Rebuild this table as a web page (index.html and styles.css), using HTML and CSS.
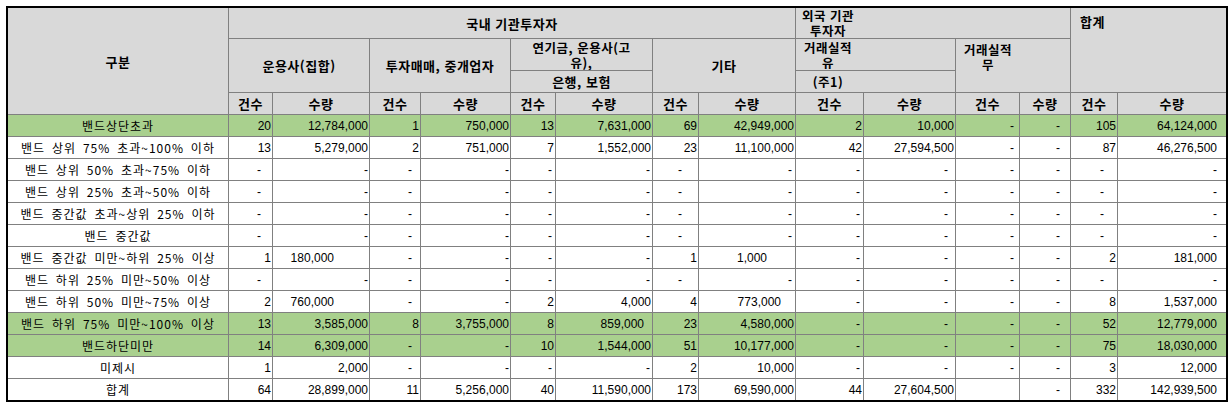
FILE: index.html
```html
<!DOCTYPE html>
<html lang="ko">
<head>
<meta charset="utf-8">
<link rel="stylesheet" href="styles.css">
</head>
<body>
<table class="grid">
<colgroup>
<col class="c-label"><col class="c-44"><col class="c-97"><col class="c-51"><col class="c-90"><col class="c-45"><col class="c-97"><col class="c-46"><col class="c-97"><col class="c-68"><col class="c-92"><col class="c-64"><col class="c-51"><col class="c-47"><col class="c-108">
</colgroup>
<thead>
<tr class="h1">
<th rowspan="4">구분</th>
<th colspan="8">국내 기관투자자</th>
<th colspan="4" class="blk"><div class="blk-in">외국 기관<br>투자자</div></th>
<th colspan="2" rowspan="3" class="total-h"><div class="total-in">합계</div></th>
</tr>
<tr class="h2">
<th colspan="2" rowspan="2">운용사(집합)</th>
<th colspan="2" rowspan="2">투자매매, 중개업자</th>
<th colspan="2" class="two">연기금, 운용사(고<br>유),</th>
<th colspan="2" rowspan="2">기타</th>
<th colspan="2" class="blk"><div class="blk-in">거래실적<br>유</div></th>
<th colspan="2" rowspan="2" class="blk top"><div class="blk-in">거래실적<br>무</div></th>
</tr>
<tr class="h3">
<th colspan="2">은행, 보험</th>
<th colspan="2" class="blk"><div class="blk-in">(주1)</div></th>
</tr>
<tr class="h4">
<th>건수</th><th>수량</th><th>건수</th><th>수량</th><th>건수</th><th>수량</th><th>건수</th><th>수량</th><th>건수</th><th>수량</th><th>건수</th><th>수량</th><th>건수</th><th class="end">수량</th>
</tr>
</thead>
<tbody>
<tr class="g">
<td class="lb">밴드상단초과</td><td>20</td><td>12,784,000</td><td>1</td><td>750,000</td><td>13</td><td>7,631,000</td><td>69</td><td>42,949,000</td><td>2</td><td>10,000</td><td class="z">-</td><td class="z">-</td><td>105</td><td class="end">64,124,000</td>
</tr>
<tr>
<td class="lb">밴드 상위 75% 초과~100% 이하</td><td>13</td><td>5,279,000</td><td>2</td><td>751,000</td><td>7</td><td>1,552,000</td><td>23</td><td>11,100,000</td><td>42</td><td>27,594,500</td><td class="z">-</td><td class="z">-</td><td>87</td><td class="end">46,276,500</td>
</tr>
<tr>
<td class="lb">밴드 상위 50% 초과~75% 이하</td><td class="z">-</td><td class="z">-</td><td class="z">-</td><td class="z">-</td><td class="z">-</td><td class="z">-</td><td class="z">-</td><td class="z">-</td><td class="z">-</td><td class="z">-</td><td class="z">-</td><td class="z">-</td><td class="z">-</td><td class="z end">-</td>
</tr>
<tr>
<td class="lb">밴드 상위 25% 초과~50% 이하</td><td class="z">-</td><td class="z">-</td><td class="z">-</td><td class="z">-</td><td class="z">-</td><td class="z">-</td><td class="z">-</td><td class="z">-</td><td class="z">-</td><td class="z">-</td><td class="z">-</td><td class="z">-</td><td class="z">-</td><td class="z end">-</td>
</tr>
<tr>
<td class="lb">밴드 중간값 초과~상위 25% 이하</td><td class="z">-</td><td class="z">-</td><td class="z">-</td><td class="z">-</td><td class="z">-</td><td class="z">-</td><td class="z">-</td><td class="z">-</td><td class="z">-</td><td class="z">-</td><td class="z">-</td><td class="z">-</td><td class="z">-</td><td class="z end">-</td>
</tr>
<tr>
<td class="lb">밴드 중간값</td><td class="z">-</td><td class="z">-</td><td class="z">-</td><td class="z">-</td><td class="z">-</td><td class="z">-</td><td class="z">-</td><td class="z">-</td><td class="z">-</td><td class="z">-</td><td class="z">-</td><td class="z">-</td><td class="z">-</td><td class="z end">-</td>
</tr>
<tr>
<td class="lb">밴드 중간값 미만~하위 25% 이상</td><td>1</td><td class="p35">180,000</td><td class="z">-</td><td class="z">-</td><td class="z">-</td><td class="z">-</td><td>1</td><td class="p28">1,000</td><td class="z">-</td><td class="z">-</td><td class="z">-</td><td class="z">-</td><td>2</td><td class="end">181,000</td>
</tr>
<tr>
<td class="lb">밴드 하위 25% 미만~50% 이상</td><td class="z">-</td><td class="z">-</td><td class="z">-</td><td class="z">-</td><td class="z">-</td><td class="z">-</td><td class="z">-</td><td class="z">-</td><td class="z">-</td><td class="z">-</td><td class="z">-</td><td class="z">-</td><td class="z">-</td><td class="z end">-</td>
</tr>
<tr>
<td class="lb">밴드 하위 50% 미만~75% 이상</td><td>2</td><td class="p35">760,000</td><td class="z">-</td><td class="z">-</td><td>2</td><td>4,000</td><td>4</td><td class="p14">773,000</td><td class="z">-</td><td class="z">-</td><td class="z">-</td><td class="z">-</td><td>8</td><td class="end">1,537,000</td>
</tr>
<tr class="g">
<td class="lb">밴드 하위 75% 미만~100% 이상</td><td>13</td><td>3,585,000</td><td>8</td><td>3,755,000</td><td>8</td><td class="p8">859,000</td><td>23</td><td>4,580,000</td><td class="z">-</td><td class="z">-</td><td class="z">-</td><td class="z">-</td><td>52</td><td class="end">12,779,000</td>
</tr>
<tr class="g">
<td class="lb">밴드하단미만</td><td>14</td><td>6,309,000</td><td class="z">-</td><td class="z">-</td><td>10</td><td>1,544,000</td><td>51</td><td>10,177,000</td><td class="z">-</td><td class="z">-</td><td class="z">-</td><td class="z">-</td><td>75</td><td class="end">18,030,000</td>
</tr>
<tr>
<td class="lb">미제시</td><td>1</td><td>2,000</td><td class="z">-</td><td class="z">-</td><td class="z">-</td><td class="z">-</td><td>2</td><td>10,000</td><td class="z">-</td><td class="z">-</td><td class="z">-</td><td class="z">-</td><td>3</td><td class="end">12,000</td>
</tr>
<tr class="last">
<td class="lb">합계</td><td>64</td><td>28,899,000</td><td>11</td><td>5,256,000</td><td>40</td><td>11,590,000</td><td>173</td><td>69,590,000</td><td>44</td><td>27,604,500</td><td></td><td class="z">-</td><td>332</td><td class="end">142,939,500</td>
</tr>
</tbody>
</table>
</body>
</html>
```
FILE: styles.css
```css
html, body {
  margin: 0;
  padding: 0;
  background: #ffffff;
}
body {
  padding: 6px 0 0 6px;
}
.grid {
  table-layout: fixed;
  border-collapse: separate;
  border-spacing: 0;
  width: 1222px;
  border: 2px solid #000000;
  font-family: "Noto Sans CJK KR", sans-serif;
  color: #000000;
}
.c-label { width: 221px; }
.c-44 { width: 44px; }
.c-97 { width: 97px; }
.c-51 { width: 51px; }
.c-90 { width: 90px; }
.c-45 { width: 45px; }
.c-46 { width: 46px; }
.c-68 { width: 68px; }
.c-92 { width: 92px; }
.c-64 { width: 64px; }
.c-47 { width: 47px; }
.c-108 { width: 108px; }

.grid th, .grid td {
  border-right: 1px solid #808080;
  border-bottom: 1px solid #808080;
  padding: 0;
  overflow: hidden;
  white-space: nowrap;
}
.grid th {
  background: #d9d9d9;
  font-size: 13px;
  font-weight: 700;
  letter-spacing: 0.5px;
  line-height: 15px;
  text-align: center;
  vertical-align: middle;
}
.grid .end { border-right: none; }
.grid .total-h { border-right: none; }

.h1 { height: 31px; }
.h2 { height: 32px; }
.h3 { height: 22px; }
.h4 { height: 22px; }
tbody tr { height: 22px; }
tbody tr.last { height: 21px; }
tbody tr.last td { border-bottom: none; }

th.two {
  font-size: 12.5px;
}
th.blk {
  text-align: left;
}
th.blk .blk-in {
  display: inline-block;
  width: 62px;
  text-align: center;
  padding-left: 1px;
  font-size: 12.5px;
}
th.blk.top {
  vertical-align: top;
  padding-top: 3px;
}
th.total-h {
  text-align: left;
  vertical-align: top;
}
.total-in {
  padding: 6px 0 0 9px;
}

.grid td {
  font-family: "Liberation Sans", "Noto Sans CJK KR", sans-serif;
  font-size: 12px;
  line-height: 14px;
  text-align: right;
  padding-right: 1px;
  vertical-align: middle;
}
.grid td.lb {
  font-family: "Noto Sans CJK KR", sans-serif;
  text-align: center;
  letter-spacing: 1px;
  word-spacing: 2.5px;
  padding-right: 0;
}
.grid td.end { padding-right: 9px; }
tbody tr.g td { background: #a9d08e; }

/* dash placement per column */
tbody td.z:nth-child(2) { padding-right: 11px; }
tbody td.z:nth-child(3) { padding-right: 1px; }
tbody td.z:nth-child(4) { padding-right: 8px; }
tbody td.z:nth-child(5) { padding-right: 1px; }
tbody td.z:nth-child(6) { padding-right: 3px; }
tbody td.z:nth-child(7) { padding-right: 2px; }
tbody td.z:nth-child(8) { padding-right: 16px; }
tbody td.z:nth-child(9) { padding-right: 3px; }
tbody td.z:nth-child(10) { padding-right: 3px; }
tbody td.z:nth-child(11) { padding-right: 7px; }
tbody td.z:nth-child(12) { padding-right: 5px; }
tbody td.z:nth-child(13) { padding-right: 10px; }
tbody td.z:nth-child(14) { padding-right: 13px; }
tbody td.z:nth-child(15) { padding-right: 9px; }

.grid td.p35 { padding-right: 35px; }
.grid td.p28 { padding-right: 28px; }
.grid td.p14 { padding-right: 14px; }
.grid td.p8 { padding-right: 8px; }
```
